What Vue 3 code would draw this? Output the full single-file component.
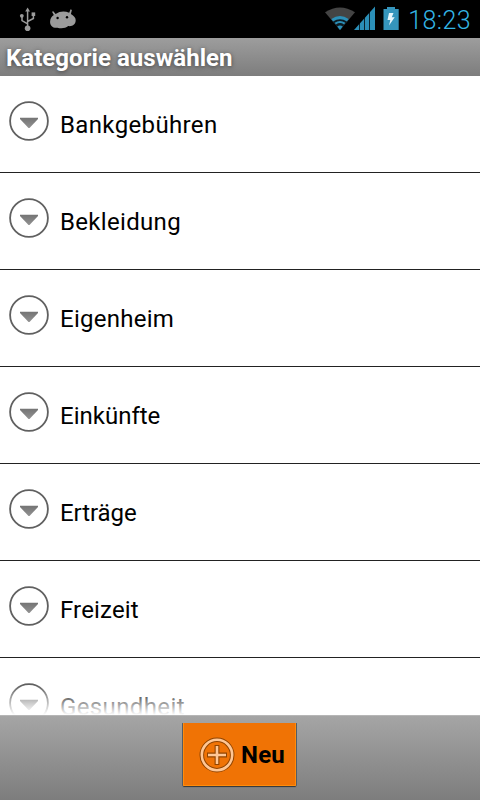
<script setup>
const categories = [
  { name: 'Bankgebühren', tracking: 0.36 },
  { name: 'Bekleidung', tracking: 0.32 },
  { name: 'Eigenheim', tracking: 0.25 },
  { name: 'Einkünfte', tracking: 0 },
  { name: 'Erträge', tracking: -0.08 },
  { name: 'Freizeit', tracking: 0.15 },
  { name: 'Gesundheit', tracking: 0.38 },
]
</script>

<template>
  <div class="screen">
    <header class="status">
      <svg class="notify" width="80" height="38" viewBox="0 0 80 38">
        <g fill="none" stroke="#9b9b9b" stroke-width="1.5">
          <path d="M27.6 10V28M27.6 23.8L22 20.6V16M27.6 21.5L33.4 18.5V14" />
        </g>
        <g fill="#9b9b9b">
          <path d="M27.6 7.5L30 11.5H25.2Z" />
          <circle cx="27.6" cy="28.2" r="2.8" />
          <circle cx="21.8" cy="15.8" r="1.9" />
          <rect x="31.6" y="12.4" width="3.6" height="3.6" />
          <path d="M52 11.8L53.3 11.2L55.6 14Q62 9.9 69.2 12.8L70.6 9.3L71.9 9.9L70.9 13.9Q75.7 16.5 75.7 20.3C75.7 24.3 72.4 26.8 68.2 26.1C65.6 28.6 60.5 28.7 57.5 27.8C52.6 28.4 49.8 25.2 50.1 21.4C50.2 18.6 51.5 16.5 53.8 15Z" />
        </g>
        <circle cx="57.6" cy="18" r="1.2" fill="#000" />
        <circle cx="67" cy="17.2" r="1.2" fill="#000" />
      </svg>
      <div class="system">
        <svg width="78" height="38" viewBox="324 0 78 38">
          <path d="M340 30L325 12.3Q340 2.5 355 12.3Z" fill="#444" />
          <path d="M340 30L332 20.5Q340 14.5 348 20.5Z" fill="#0c1b22" />
          <path d="M332.2 20.3Q340 14.9 347.8 20.3" fill="none" stroke="#2b8fb8" stroke-width="3" />
          <path d="M335.3 23.7Q340 20.3 344.7 23.7" fill="none" stroke="#2b8fb8" stroke-width="2.2" />
          <path d="M340 30L337.2 26.5Q340 24.7 342.8 26.5Z" fill="#2b8fb8" />
          <path d="M354 30L375 6.5V30Z" fill="#2b8fb8" />
          <path d="M359.5 20V30M364.5 15V30M369.5 8V30" stroke="#000" stroke-width="1" opacity=".75" />
          <path d="M383.5 9H387V7H395V9H398.7V30H383.5Z" fill="#3595bc" />
          <path d="M389 13H393.5L391.8 17.3H394.7L389 25.5L390.3 20H387.5Z" fill="#e6f5fb" />
        </svg>
        <span class="clock">18:23</span>
      </div>
    </header>
    <h1 class="title">Kategorie auswählen</h1>
    <main class="list">
      <div v-for="item in categories" :key="item.name" class="row">
        <svg class="expander" width="42" height="42" viewBox="0 0 42 42">
          <defs>
            <linearGradient id="arrow" x1="0" y1="0" x2="0" y2="1">
              <stop offset="0" stop-color="#747474" />
              <stop offset="1" stop-color="#929292" />
            </linearGradient>
          </defs>
          <circle cx="21" cy="21" r="18.9" fill="none" stroke="#606060" stroke-width="1.8" />
          <path d="M12 17.7H30V19L21.5 28H20.5L12 19Z" fill="url(#arrow)" />
        </svg>
        <span class="name" :style="{ letterSpacing: item.tracking + 'px' }">{{ item.name }}</span>
      </div>
    </main>
    <footer class="bar">
      <button class="new">
        <svg width="38" height="38" viewBox="0 0 38 38">
          <circle cx="19" cy="19" r="15.2" fill="none" stroke="#914400" stroke-width="4.6" />
          <path d="M19 9V29M9 19H29" stroke="#914400" stroke-width="4.8" />
          <circle cx="19" cy="19" r="15.2" fill="none" stroke="#ffc694" stroke-width="2.6" />
          <path d="M19 10V28M10 19H28" stroke="#ffc694" stroke-width="2.6" />
        </svg>
        <span>Neu</span>
      </button>
    </footer>
  </div>
</template>

<style>
body {
  background: #fff;
}
</style>

<style scoped>
.screen {
  width: 480px;
  height: 800px;
  display: flex;
  flex-direction: column;
  overflow: hidden;
  background: #fff;
  color: #000;
  font-family: Roboto, sans-serif;
}
.status {
  flex: none;
  height: 38px;
  display: flex;
  justify-content: space-between;
  background: #000;
}
.system {
  display: flex;
  padding-right: 9px;
}
.clock {
  margin-left: 6px;
  font-size: 25px;
  line-height: 41px;
  letter-spacing: 0.4px;
  color: #33b5e5;
  font-weight: 300;
}
.title {
  flex: none;
  box-sizing: border-box;
  height: 38px;
  margin: 0;
  padding-left: 6px;
  font-size: 24px;
  line-height: 40px;
  font-weight: 700;
  letter-spacing: 0.04px;
  color: #fff;
  background: linear-gradient(#9d9d9d, #7d7d7d);
  text-shadow: 0 1px 4px #444;
}
.list {
  position: relative;
  height: 639px;
  overflow: hidden;
}
.list::after {
  content: '';
  position: absolute;
  inset: auto 0 0;
  height: 30px;
  background: linear-gradient(rgba(255, 255, 255, 0), #fff);
}
.row {
  box-sizing: border-box;
  height: 97px;
  display: flex;
  padding: 24px 0 0 8px;
  border-bottom: 1px solid #222;
}
.expander {
  flex: none;
}
.name {
  margin: 5px 0 0 10px;
  font-size: 24px;
  line-height: 40px;
}
.bar {
  flex: none;
  box-sizing: border-box;
  height: 85px;
  display: flex;
  justify-content: center;
  align-items: flex-start;
  padding: 7px 1px 0 0;
  border-top: 1px solid #b6b6b6;
  background: linear-gradient(#a5a5a5, #7d7d7d);
}
.new {
  box-sizing: border-box;
  width: 113px;
  height: 63px;
  display: flex;
  align-items: center;
  padding: 1px 0 0 14px;
  gap: 5px;
  border: 1px solid #ff8c0c;
  border-top: 0;
  border-radius: 0 0 1px 1px;
  background: #f07305;
  box-shadow: 0 1px 1px #333, -1px 0 0 #59616b, 1px 0 0 #59616b;
  color: #000;
  font: 700 24px Roboto, sans-serif;
  letter-spacing: 0.2px;
}
</style>
